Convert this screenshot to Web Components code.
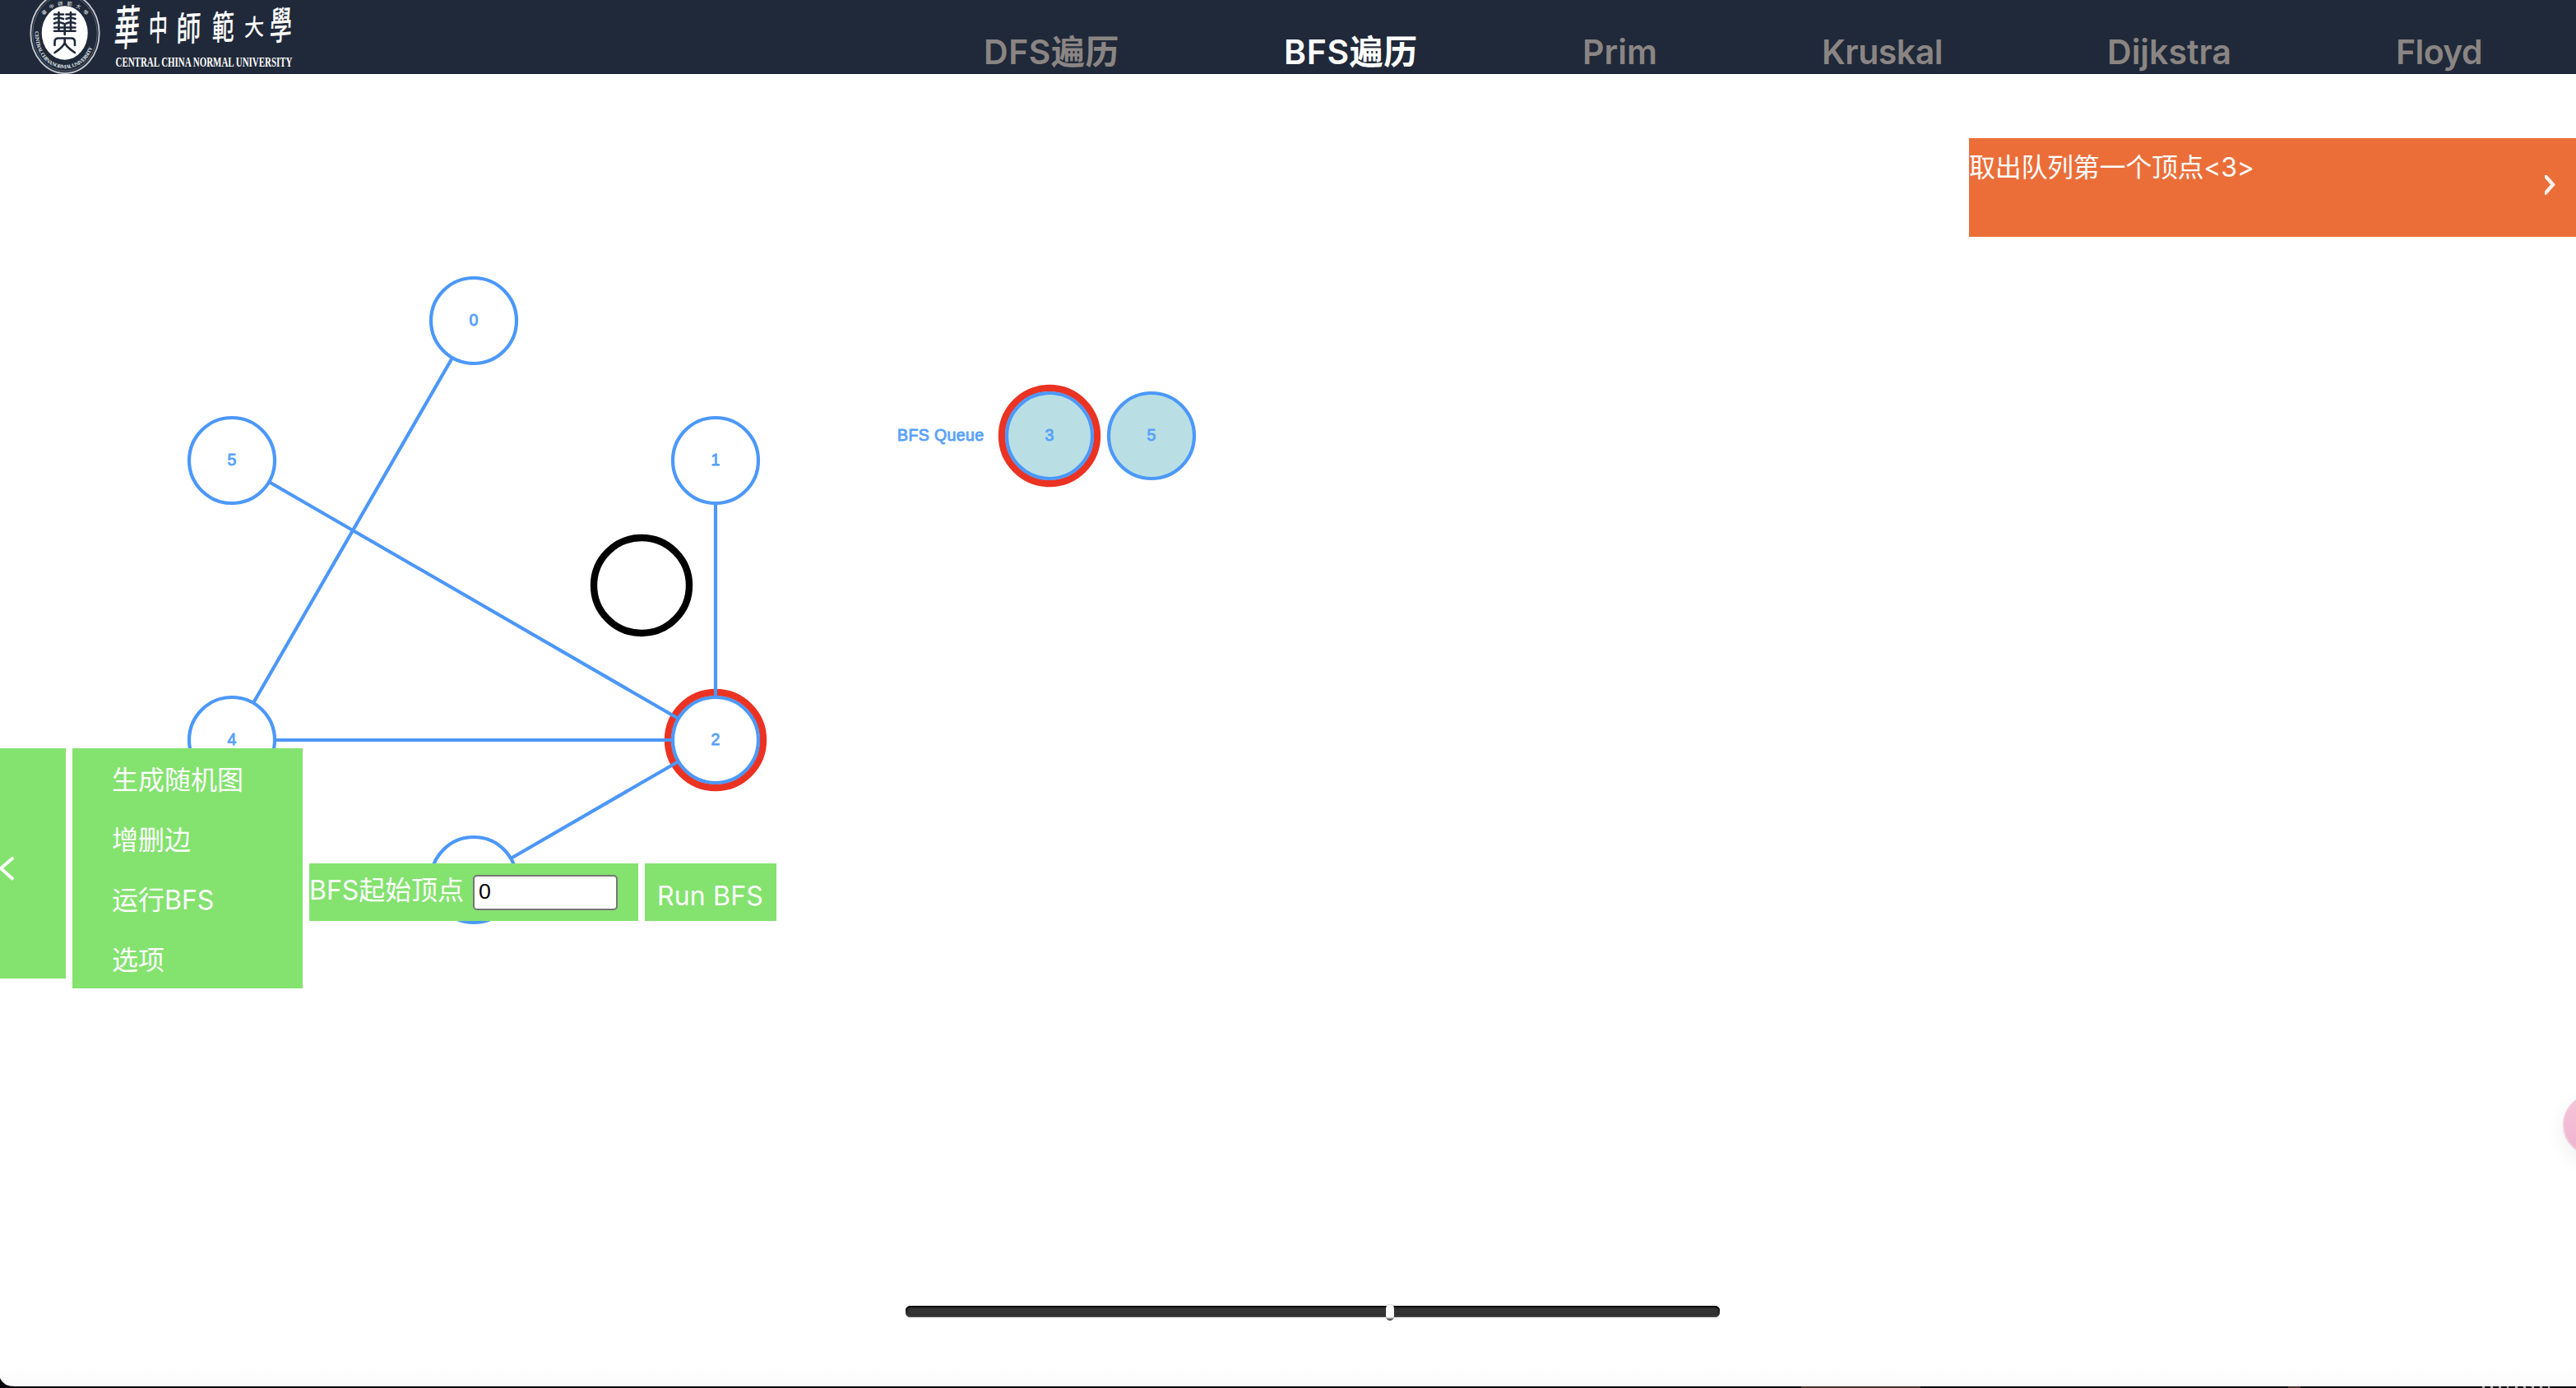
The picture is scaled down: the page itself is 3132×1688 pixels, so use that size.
<!DOCTYPE html>
<html lang="zh-CN">
<head>
<meta charset="utf-8">
<title>BFS遍历</title>
<style>
html,body{margin:0;height:100%;overflow:hidden;background:#fff}
body{font-family:Inter,"Noto Sans CJK SC",sans-serif}
</style>
</head>
<body>
<graph-app></graph-app>
<script>
const define = (name, html, setup) => {
  const t = document.createElement('template');
  t.innerHTML = html;
  customElements.define(name, class extends HTMLElement {
    connectedCallback() {
      if (this.shadowRoot) return;
      this.attachShadow({mode: 'open'}).append(t.content.cloneNode(true));
      if (setup) setup.call(this, this.shadowRoot);
    }
  });
};

// Text run whose tracking is adjusted so that it takes up a given width
define('fit-text', `<style>:host{display:inline-block;white-space:nowrap}span{display:inline-block}</style><span></span>`, function (r) {
  const s = r.querySelector('span'), w = +this.getAttribute('w');
  s.textContent = this.getAttribute('text');
  const n = s.getBoundingClientRect().width;
  s.style.letterSpacing = ((w - n) / s.textContent.length) + 'px';
  this.style.width = w + 'px';
});

define('school-logo', `
<style>:host{display:block;width:400px;height:90px}svg{display:block}</style>
<svg width="400" height="90" viewBox="0 0 400 90">
  <ellipse cx="79" cy="40.5" rx="41.7" ry="48.6" fill="none" stroke="#c6cad1" stroke-width="1.8"/>
  <ellipse cx="79" cy="40.5" rx="39.2" ry="46" fill="none" stroke="#6a7280" stroke-width=".8"/>
  <ellipse cx="78.7" cy="40" rx="28" ry="32.7" fill="#fff"/>
  <g fill="none" stroke="#202939" stroke-width="2.6" stroke-linecap="round" stroke-linejoin="round">
    <path d="M66 17.5H77M80.500 17.500H91.500M71.500 15V37M86 15V37"/>
    <path d="M66 23Q71 20.500 77 23M80.500 23Q86 20.500 91.500 23"/>
    <path d="M66 28.500Q71 26 77 28.500M80.500 28.500Q86 26 91.500 28.500"/>
    <path d="M66 33.500H91.500M66 37.800H91.500M78.700 29V42"/>
    <path d="M66.500 55V51Q66.500 46.500 71 46.500H86.500Q91 46.500 91 51V55M78.700 46.500V52Q77 57 66.500 64M78.700 52Q80.500 57 91 64"/>
  </g>
  <path id="arc" d="M42.500 38C42.500 66 58 83.200 79 83.200C100 83.200 115.500 66 115.500 38" fill="none"/>
  <text font-family="Liberation Serif,serif" font-weight="700" font-size="6.500" fill="#dfe2e6"><textPath href="#arc" textLength="110" lengthAdjust="spacing">CENTRAL CHINA NORMAL UNIVERSITY</textPath></text>
  <g font-family="Noto Sans CJK TC,sans-serif" font-size="6" fill="#e4e6ea" text-anchor="middle">
    <text transform="translate(55 17) rotate(-35)">華</text><text transform="translate(63.500 10) rotate(-20)">中</text>
    <text transform="translate(73.500 6.700) rotate(-5)">師</text><text transform="translate(84.500 6.700) rotate(5)">範</text>
    <text transform="translate(94.500 10) rotate(20)">大</text><text transform="translate(103 17) rotate(35)">學</text>
  </g>
  <g font-family="Noto Sans CJK TC,sans-serif" font-weight="400" fill="#fff" stroke="#fff" stroke-width=".5" text-anchor="middle">
    <text transform="translate(153 55) skewX(-8) rotate(-4) scale(.62 1.180)" font-size="49">華</text>
    <text transform="translate(192 49) skewX(-5) rotate(-4) scale(.64 1.150)" font-size="36">中</text>
    <text transform="translate(229 50) skewX(-5) rotate(-4) scale(.78 1.100)" font-size="38">師</text>
    <text transform="translate(271 48) skewX(-5) rotate(-4) scale(.7 1.080)" font-size="38">範</text>
    <text transform="translate(309 43) skewX(-5) rotate(-4) scale(.82 .95)" font-size="29">大</text>
    <text transform="translate(341 48) skewX(-6) rotate(-4) scale(.65 1.150)" font-size="41">學</text>
  </g>
  <text x="140.500" y="81.300" font-family="Liberation Serif,serif" font-weight="700" font-size="15.800" fill="#fff" textLength="215" lengthAdjust="spacingAndGlyphs">CENTRAL CHINA NORMAL UNIVERSITY</text>
</svg>`);

define('nav-bar', `
<style>
:host{display:flex;height:90px;background:#202939;box-shadow:inset 0 -1px #171c2c;box-sizing:border-box;justify-content:space-between}
nav{display:flex;gap:200px;padding:35px 114px 0 0;font-weight:600;font-size:41px;line-height:56px;color:#8a8583}
.on{color:#fff}
</style>
<school-logo></school-logo>
<nav>
<fit-text w="165" text="DFS遍历"></fit-text><fit-text class="on" w="163" text="BFS遍历"></fit-text><fit-text w="91" text="Prim"></fit-text><fit-text w="147" text="Kruskal"></fit-text><fit-text w="151" text="Dijkstra"></fit-text><fit-text w="105" text="Floyd"></fit-text>
</nav>`);

define('graph-canvas', `
<style>:host{display:block}svg{display:block}text{font:500 19.500px "Liberation Sans",sans-serif;fill:#58a1fb;stroke:#58a1fb;stroke-width:.9;text-anchor:middle}</style>
<svg width="3132" height="1598" viewBox="0 90 3132 1598"></svg>`, function (r) {
  const nodes = [[576,390],[870,560],[870,900],[576,1070],[282,900],[282,560]];
  const edges = [[0,4],[5,2],[1,2],[4,2],[3,2]];
  let s = '';
  const ring = (x, y, rad, c, w, f) => `<circle cx="${x}" cy="${y}" r="${rad}" stroke="${c}" stroke-width="${w}" fill="${f}"/>`;
  const label = (x, y, t) => `<text x="${x}" y="${y + 6}">${t}</text>`;
  s += ring(870, 900, 58, '#ea3323', 8.4, 'none');
  for (const [a, b] of edges) {
    const [x1, y1] = nodes[a], [x2, y2] = nodes[b], d = Math.hypot(x2 - x1, y2 - y1);
    const ux = (x2 - x1) / d * 52, uy = (y2 - y1) / d * 52;
    s += `<path d="M${x1 + ux} ${y1 + uy}L${x2 - ux} ${y2 - uy}" stroke="#4c97f9" stroke-width="4.2"/>`;
  }
  nodes.forEach(([x, y], i) => s += ring(x, y, 52, '#4c98fa', 4.2, '#fff') + label(x, y, i));
  s += ring(780, 712, 58, '#000', 8.4, 'none');
  s += ring(1276, 530, 58, '#ea3323', 8.4, 'none') + ring(1276, 530, 52, '#4c98fa', 4.2, '#b9dfe4') + label(1276, 530, 3);
  s += ring(1400, 530, 52, '#4c98fa', 4.2, '#b9dfe4') + label(1400, 530, 5);
  s += `<text x="1143.500" y="536" textLength="105">BFS Queue</text>`;
  r.querySelector('svg').innerHTML = s;
});

define('status-banner', `
<style>
:host{display:flex;justify-content:space-between;width:738px;height:120px;background:#eb6e39;color:#fff;font-size:32px;line-height:44px}
p{margin:14px 0 0;letter-spacing:-.3px}svg{display:block;margin:45px 24px 0 0}
</style>
<p><slot></slot></p>
<svg width="14" height="24" viewBox="0 0 14 24"><path d="M-2 -2L10 11.500L-2 25" fill="none" stroke="#fff" stroke-width="4.400" stroke-opacity=".9"/></svg>`);

define('menu-item', `<style>:host{display:block;height:73px;padding-left:48px;line-height:77px;box-sizing:border-box}</style><slot></slot>`);

define('control-panel', `
<style>
:host{display:flex;gap:8px;align-items:flex-start;color:#fff;font-size:32px}
.toggle{width:80px;height:280px;background:#84e26f;display:flex;align-items:center}
.toggle svg{display:block;margin-top:11px}
.menu{width:280px;height:292px;background:#84e26f}
.form,.run{margin-top:140px;height:70px;background:#84e26f;display:flex;box-sizing:border-box}
.form{width:400px}.run{width:160px;padding:20px 0 0 15px;line-height:40px}
.form fit-text{margin-top:13px;line-height:40px}
input{margin:14px 0 0 11px;width:176px;height:43px;box-sizing:border-box;border:2px solid #767676;border-radius:5px;padding:0 5px 2px;background:#fff;color:#000;font:26.670px "Liberation Sans",sans-serif}
</style>
<div class="toggle"><svg width="20" height="32" viewBox="0 0 20 32"><path d="M15 4L1 16L15 28.500" fill="none" stroke="#fff" stroke-width="3.800" stroke-linecap="round"/></svg></div>
<div class="menu"><menu-item>生成随机图</menu-item><menu-item>增删边</menu-item><menu-item>运行BFS</menu-item><menu-item>选项</menu-item></div>
<div class="form"><fit-text w="188" text="BFS起始顶点"></fit-text><input value="0"></div>
<div class="run"><fit-text w="129" text="Run BFS"></fit-text></div>`);

define('speed-slider', `
<style>
:host{display:block;width:990px;height:14px;border-radius:6px;background:#363636;box-shadow:inset 0 2px #080808,inset 0 -2px #444,inset 0 0 6px #181818}
i{display:block;position:relative;left:584px;top:-2px;width:10px;height:20px;border-radius:5px;background:linear-gradient(#fff 78%,#333 96%);box-shadow:inset 0 0 1px #555;box-sizing:border-box}
</style><i></i>`);

define('float-bubble', `
<style>:host{display:block;width:76px;height:76px;border-radius:50%;box-sizing:border-box;border:2px solid #f2c9da;background:linear-gradient(#f6c4da,#eeb4cd);box-shadow:0 8px 24px rgba(0,0,0,.07)}</style>`);

define('desktop-edge', `
<style>
:host{display:block;height:26px}
svg{display:block}
</style>
<svg width="3132" height="26" viewBox="0 0 3132 26">
  <defs><linearGradient id="g" x2="0" y2="1"><stop stop-color="#fff"/><stop offset="1" stop-color="#fafafa"/></linearGradient></defs>
  <rect width="3132" height="24" fill="url(#g)"/>
  <path d="M0 14Q4 24 18 24H3132V26H0Z" fill="#07040d"/>
  <path d="M2190 24H2335V26H2190ZM2782 24H2797V26H2782Z" fill="#4a2f26"/>
  <path d="M3018 25H3050M3058 25H3100" stroke="#aaa" stroke-width="2" stroke-dasharray="3 7"/>
</svg>`);

define('graph-app', `
<style>
:host{display:flex;flex-direction:column;width:3132px;height:1688px;position:relative;overflow:hidden}
status-banner,control-panel,speed-slider,float-bubble,desktop-edge{position:absolute}
status-banner{right:0;top:168px}
control-panel{left:0;top:910px}
speed-slider{left:1101px;top:1588px}
float-bubble{left:3116px;top:1330px}
desktop-edge{left:0;bottom:0}
</style>
<nav-bar></nav-bar>
<graph-canvas></graph-canvas>
<status-banner>取出队列第一个顶点&lt;3&gt;</status-banner>
<control-panel></control-panel>
<desktop-edge></desktop-edge>
<speed-slider></speed-slider>
<float-bubble></float-bubble>`);
</script>
</body>
</html>
